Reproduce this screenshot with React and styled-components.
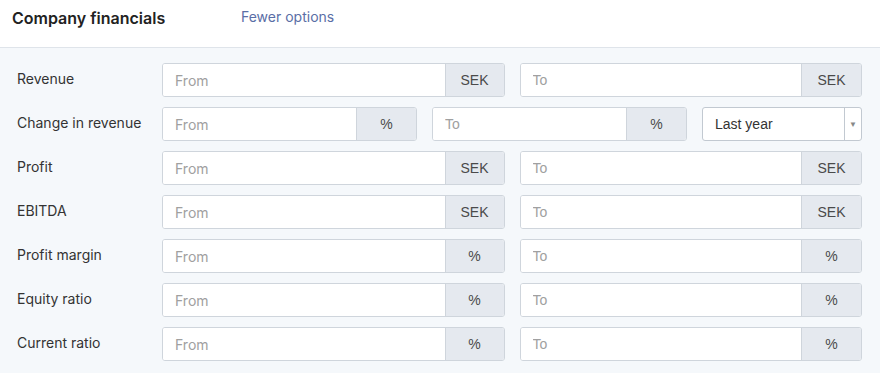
import styled, { createGlobalStyle } from "styled-components";

const GlobalStyle = createGlobalStyle`
  body {
    margin: 0;
    background: #f5f8fb;
    font-family: Inter, "Liberation Sans", sans-serif;
  }
  * {
    box-sizing: border-box;
  }
`;

const Panel = styled.div`
  width: 880px;
  height: 373px;
  background: #f5f8fb;
`;

const Header = styled.header`
  display: flex;
  align-items: center;
  height: 48px;
  padding: 0 0 12px 12px;
  background: #fff;
  border-bottom: 1px solid #dfe4ea;
`;

const Title = styled.h3`
  width: 229px;
  margin: 0;
  font-size: 16px;
  font-weight: 600;
  color: #222;
`;

const ToggleLink = styled.a`
  font-size: 14px;
  color: #5a6ea6;
  cursor: pointer;
  margin-top: -2px;
`;

const Body = styled.section`
  display: grid;
  row-gap: 10px;
  padding: 15px 18px 0 17px;
`;

const Row = styled.div`
  display: grid;
  grid-template-columns: 145px 1fr;
`;

const Label = styled.label`
  padding-top: 7px;
  font-size: 14px;
  line-height: 17px;
  color: #333;
`;

const Fields = styled.div`
  display: grid;
  grid-template-columns: ${(p) => p.$cols || "1fr 1fr"};
  column-gap: 15px;
`;

const Group = styled.div`
  display: flex;
  height: 34px;
  background: #fff;
  border: 1px solid #cfd5dc;
  border-radius: 3px;
  overflow: hidden;
`;

const Input = styled.input`
  flex: 1;
  min-width: 0;
  border: 0;
  outline: none;
  padding: 0 12px;
  font-size: 14px;
  font-family: ${(p) =>
    p.$arial ? '"Liberation Sans", Arial, sans-serif' : 'Inter, "Liberation Sans", sans-serif'};
  color: #333;
  &::placeholder {
    color: #a0a0a0;
  }
`;

const Addon = styled.span`
  display: flex;
  align-items: center;
  justify-content: center;
  width: ${(p) => p.$w || 59}px;
  background: #e5e9ef;
  border-left: 1px solid #cfd5dc;
  font-family: "Liberation Sans", Arial, sans-serif;
  font-size: 14px;
  color: #4a4a4a;
`;

const Select = styled.div`
  display: flex;
  height: 34px;
  background: #fff;
  border: 1px solid #c2c9d1;
  border-radius: 3px;
  font-family: "Liberation Sans", Arial, sans-serif;
  font-size: 14px;
  color: #333;
`;

const SelectValue = styled.span`
  flex: 1;
  display: flex;
  align-items: center;
  padding-left: 12px;
`;

const Caret = styled.span`
  display: flex;
  align-items: center;
  justify-content: center;
  width: 17px;
  border-left: 1px solid #c2c9d1;
  font-size: 8px;
  color: #888;
`;

const RangeField = ({ placeholder, unit, arial, w }) => (
  <Group>
    <Input placeholder={placeholder} $arial={arial} />
    <Addon $w={w}>{unit}</Addon>
  </Group>
);

const rows = [
  { label: "Revenue", unit: "SEK" },
  { label: "Change in revenue", unit: "%", change: true },
  { label: "Profit", unit: "SEK" },
  { label: "EBITDA", unit: "SEK" },
  { label: "Profit margin", unit: "%" },
  { label: "Equity ratio", unit: "%" },
  { label: "Current ratio", unit: "%" },
];

const App = () => {
  return (
    <Panel>
      <GlobalStyle />
      <Header>
        <Title>Company financials</Title>
        <ToggleLink>Fewer options</ToggleLink>
      </Header>
      <Body>
        {rows.map((r) => (
          <Row key={r.label}>
            <Label>{r.label}</Label>
            {r.change ? (
              <Fields $cols="255px 255px 160px">
                <RangeField placeholder="From" unit={r.unit} w={60} />
                <RangeField placeholder="To" unit={r.unit} w={60} arial />
                <Select>
                  <SelectValue>Last year</SelectValue>
                  <Caret>▼</Caret>
                </Select>
              </Fields>
            ) : (
              <Fields>
                <RangeField placeholder="From" unit={r.unit} />
                <RangeField placeholder="To" unit={r.unit} w={60} arial />
              </Fields>
            )}
          </Row>
        ))}
      </Body>
    </Panel>
  );
};

export default App;
